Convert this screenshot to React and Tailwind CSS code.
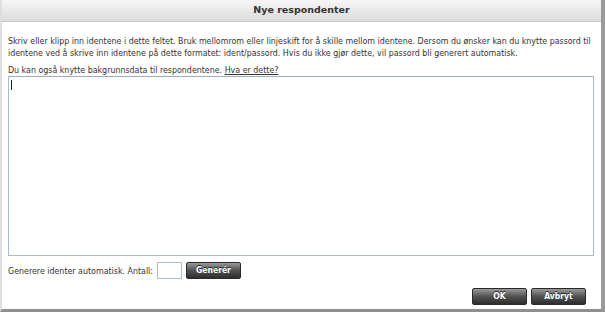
import React from "react";

const DarkButton = ({ children, className = "" }) => (
  <button
    className={`h-[17px] rounded-[2px] border border-[#2a2a2a] bg-gradient-to-b from-[#9a9a9a] via-[#525252] to-[#2e2e2e] text-[8.5px] font-bold leading-none text-white [text-shadow:0_-1px_0_#222] ${className}`}
  >
    {children}
  </button>
);

export default function App() {
  return (
    <div className="w-[605px] h-[312px] bg-white font-['DejaVu_Sans_Condensed','DejaVu_Sans',Verdana,sans-serif] [font-stretch:condensed] text-[#333]">
      <div className="flex h-full flex-col border-l-2 border-r-4 border-b-[3px] border-l-[#dedede] border-r-[#9a9a9a] border-b-[#8f8f8f]">
        {/* Header */}
        <div className="flex h-[22px] shrink-0 items-center justify-center border-b border-[#c8c8c8] bg-gradient-to-b from-[#f6f6f6] to-[#dcdcdc]">
          <span className="font-['DejaVu_Sans',Verdana,sans-serif] [font-stretch:normal] text-[9.5px] font-bold text-[#333]">
            Nye respondenter
          </span>
        </div>

        {/* Body */}
        <div className="flex flex-1 flex-col px-[6px] text-[8.8px] leading-[12px]">
          <p className="mt-[13px]">
            Skriv eller klipp inn identene i dette feltet. Bruk mellomrom eller linjeskift for å skille mellom identene. Dersom du ønsker kan du knytte passord til identene ved å skrive inn identene på dette formatet: ident/passord. Hvis du ikke gjør dette, vil passord bli generert automatisk.
          </p>
          <p className="mt-[5px]">
            Du kan også knytte bakgrunnsdata til respondentene. <a className="underline">Hva er dette?</a>
          </p>

          <div className="mr-[1px] h-[180px] border border-[#aabbd0] border-t-[#9aabc2] bg-white px-[2px] pt-[3px]">
            <div className="h-[10px] w-px bg-[#222]" />
          </div>

          <div className="mt-[6px] flex items-center gap-[4px]">
            <span>Generere identer automatisk. Antall:</span>
            <div className="h-[17px] w-[25px] border border-[#a9bdd4] bg-white" />
            <DarkButton className="w-[55px]">Generér</DarkButton>
          </div>

          <div className="mt-[9px] flex justify-end gap-[4px] pr-[9px]">
            <DarkButton className="w-[55px]">OK</DarkButton>
            <DarkButton className="w-[55px]">Avbryt</DarkButton>
          </div>
        </div>
      </div>
    </div>
  );
}
